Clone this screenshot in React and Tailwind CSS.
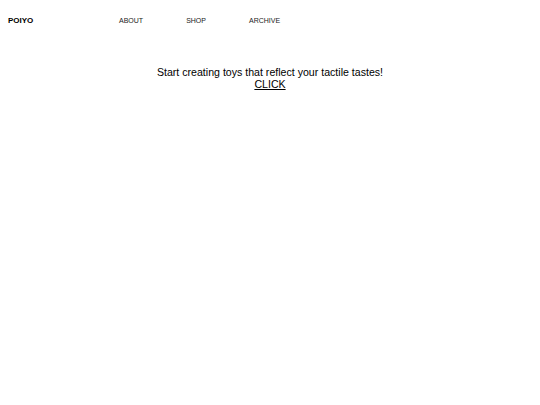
export default function App() {
  return (
    <div className="min-h-[405px] bg-white text-black" style={{ fontFamily: '"Liberation Sans", Arial, sans-serif' }}>
      <nav className="flex items-center px-2 pt-[15px]">
        <div className="w-[111px] text-[8px] font-bold leading-[11px]">POIYO</div>
        <ul className="flex gap-[43px] text-[7px] leading-[11px] text-[#222]">
          <li>ABOUT</li>
          <li>SHOP</li>
          <li>ARCHIVE</li>
        </ul>
      </nav>
      <main className="mt-[40px] flex flex-col items-center text-[10.6px] leading-[12px]">
        <p>Start creating toys that reflect your tactile tastes!</p>
        <a className="underline">CLICK</a>
      </main>
    </div>
  );
}
